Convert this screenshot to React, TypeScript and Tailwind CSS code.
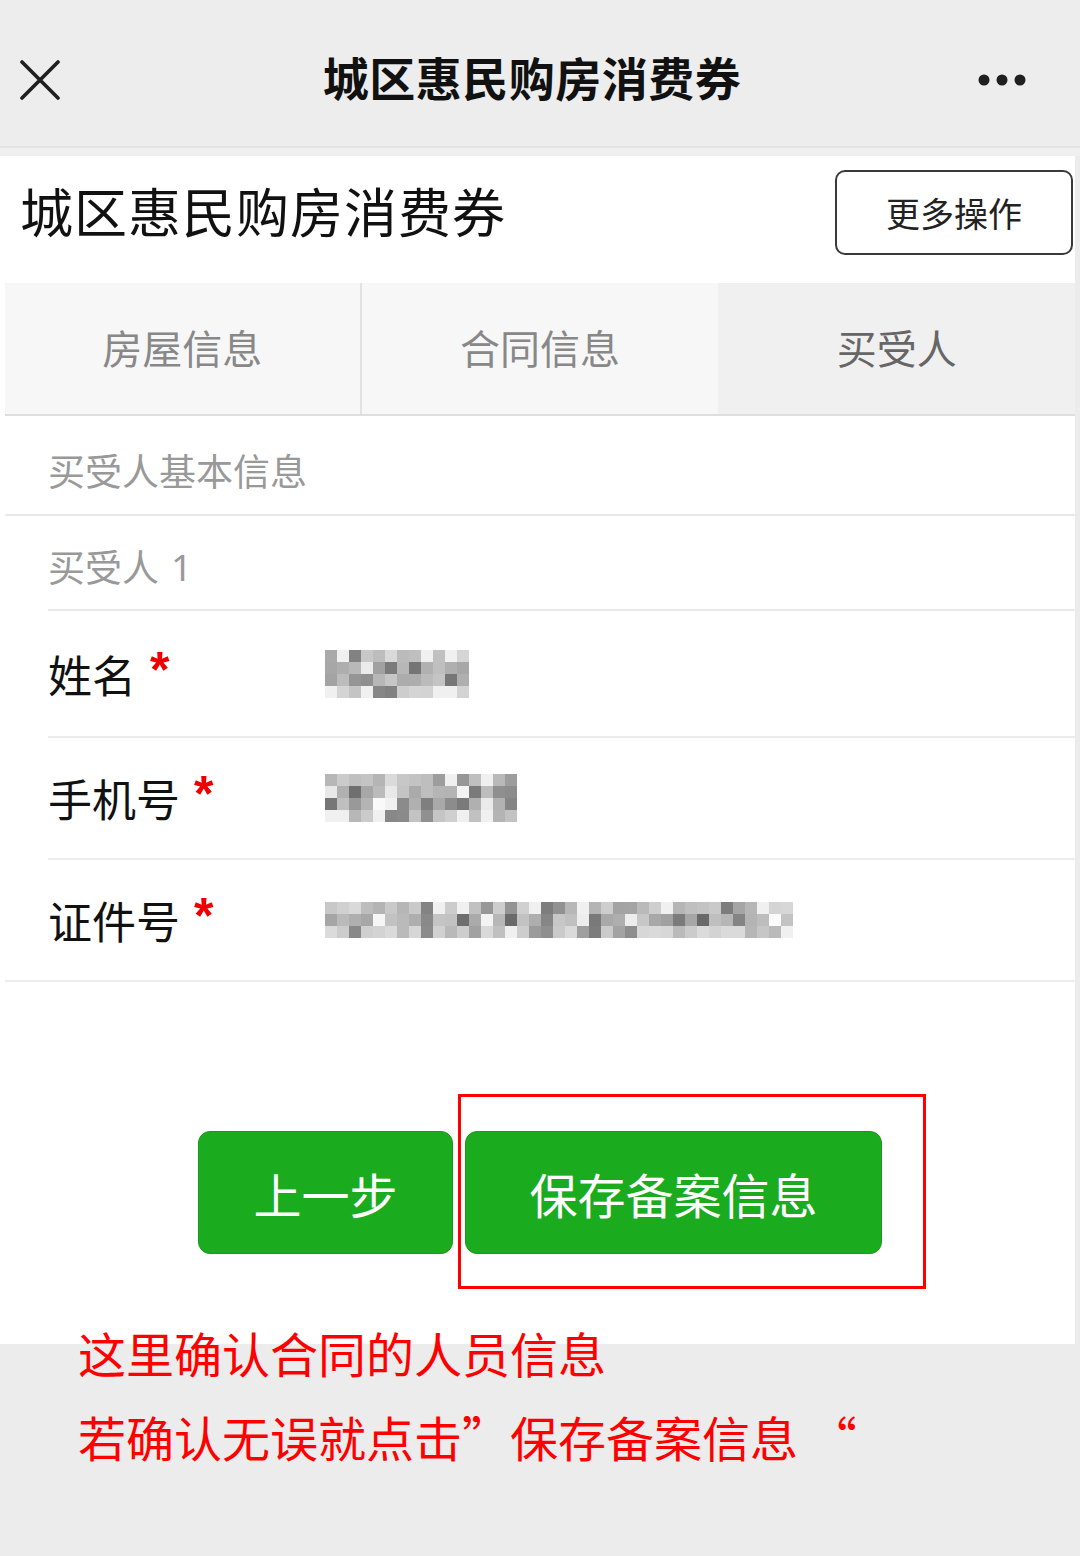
import React from "react";

function Pixels({ cols, rows, seed }: { cols: number; rows: number; seed: number }) {
  const cells: React.ReactNode[] = [];
  let s = seed;
  const rnd = () => {
    s = (s * 9301 + 49297) % 233280;
    return s / 233280;
  };
  for (let r = 0; r < rows; r++) {
    for (let c = 0; c < cols; c++) {
      const v = rnd();
      let g: number;
      if (v < 0.12) g = 0xe8 + Math.floor(rnd() * 20);
      else if (v < 0.72) g = 0xa0 + Math.floor(rnd() * 40);
      else g = 0x68 + Math.floor(rnd() * 50);
      if (r === rows - 1 || r === 0) g = Math.min(0xf0, g + 20);
      const hex = "#" + g.toString(16).repeat(3);
      cells.push(<rect key={r * 100 + c} x={c * 12} y={r * 12} width={12} height={12} fill={hex} />);
    }
  }
  return (
    <svg width={cols * 12} height={rows * 12} viewBox={`0 0 ${cols * 12} ${rows * 12}`} shapeRendering="crispEdges">
      {cells}
    </svg>
  );
}

function Field({ label, cols, rows, seed, h, last }: { label: string; cols: number; rows: number; seed: number; h: string; last?: boolean }) {
  return (
    <div className={`flex items-center ml-[43px] ${h} ${last ? "" : "border-b-2 border-[#ececec]"}`}>
      <div className="w-[277px] flex items-center text-[44px] text-[#111] leading-none">
        <span>{label}</span>
        <span className="ml-[14px] text-[#ee0000] text-[50px] -mt-[8px] font-['Liberation_Sans',sans-serif] font-bold">*</span>
      </div>
      <Pixels cols={cols} rows={rows} seed={seed} />
    </div>
  );
}

export default function App() {
  return (
    <div className="w-[1080px] h-[1556px] bg-[#ececec] font-['Noto_Sans_CJK_SC','Noto_Sans',sans-serif] overflow-hidden">
      <header className="h-[148px] bg-[#ededed] border-b-2 border-[#e3e3e3] relative flex items-center justify-center">
        <svg className="absolute left-[20px] top-[60px]" width="40" height="40" viewBox="0 0 40 40">
          <path d="M2 2 L38 38 M38 2 L2 38" stroke="#1f1f1f" strokeWidth="3.6" strokeLinecap="round" />
        </svg>
        <h1 className="text-[46px] font-bold text-[#111] leading-none pr-[16px] pt-[6px] tracking-[0.5px]">城区惠民购房消费券</h1>
        <svg className="absolute left-[976px] top-[72px]" width="52" height="16" viewBox="0 0 52 16">
          <circle cx="8" cy="8" r="5.5" fill="#1f1f1f" />
          <circle cx="26" cy="8" r="5.5" fill="#1f1f1f" />
          <circle cx="44" cy="8" r="5.5" fill="#1f1f1f" />
        </svg>
      </header>
      <div className="h-[8px] bg-[#f0f0f0]" />
      <main className="mr-[5px] bg-white">
        <div className="h-[127px] flex items-center justify-between pl-[20px] pr-[2px]">
          <div className="text-[53px] text-[#111] leading-none tracking-[1px] -mt-[18px]">城区惠民购房消费券</div>
          <button className="w-[238px] h-[85px] border-2 border-[#3a3a3a] rounded-[10px] text-[34px] text-[#222] flex items-center justify-center -mt-[14px]">
            更多操作
          </button>
        </div>
        <div className="ml-[5px]">
          <div className="grid grid-cols-3 h-[133px] border-b-2 border-[#dedede]">
            <div className="bg-[#f7f7f7] border-r-2 border-[#e2e2e2] flex items-center justify-center text-[40px] text-[#888] pb-[4px]">房屋信息</div>
            <div className="bg-[#f7f7f7] flex items-center justify-center text-[40px] text-[#888] pb-[4px]">合同信息</div>
            <div className="bg-[#f0f0f0] flex items-center justify-center text-[40px] text-[#666] pb-[4px]">买受人</div>
          </div>
          <div className="h-[100px] flex items-center pl-[43px] text-[37px] text-[#999] border-b-2 border-[#e8e8e8] pt-[12px]">买受人基本信息</div>
          <div className="h-[95px] ml-[43px] flex items-center text-[37px] text-[#999] border-b-2 border-[#e8e8e8] pt-[8px]">
            买受人 <span className="ml-[12px] font-['Noto_Sans',sans-serif]">1</span>
          </div>
          <Field label="姓名" cols={12} rows={4} seed={17} h="h-[127px]" />
          <Field label="手机号" cols={16} rows={4} seed={83} h="h-[122px]" />
          <div className="border-b-2 border-[#ececec]">
            <Field label="证件号" cols={39} rows={3} seed={251} h="h-[120px]" last />
          </div>
          <div className="h-[362px] flex justify-start pl-[193px] pt-[149px]">
            <div className="flex gap-[12px] relative h-[123px]">
              <button className="w-[255px] h-[123px] bg-[#1aab1f] rounded-[12px] text-white text-[48px] flex items-center justify-center border border-[#189a1c]">上一步</button>
              <button className="w-[417px] h-[123px] bg-[#1aab1f] rounded-[12px] text-white text-[48px] flex items-center justify-center border border-[#189a1c]">保存备案信息</button>
              <div className="absolute left-[260px] top-[-37px] w-[468px] h-[195px] border-[3px] border-[#ff0000]" />
            </div>
          </div>
        </div>
      </main>
      <div className="relative -mt-[34px] pl-[78px] text-[#ff0000] text-[48px] leading-[84px]">
        <div>这里确认合同的人员信息</div>
        <div>若确认无误就点击”保存备案信息 “</div>
      </div>
    </div>
  );
}
